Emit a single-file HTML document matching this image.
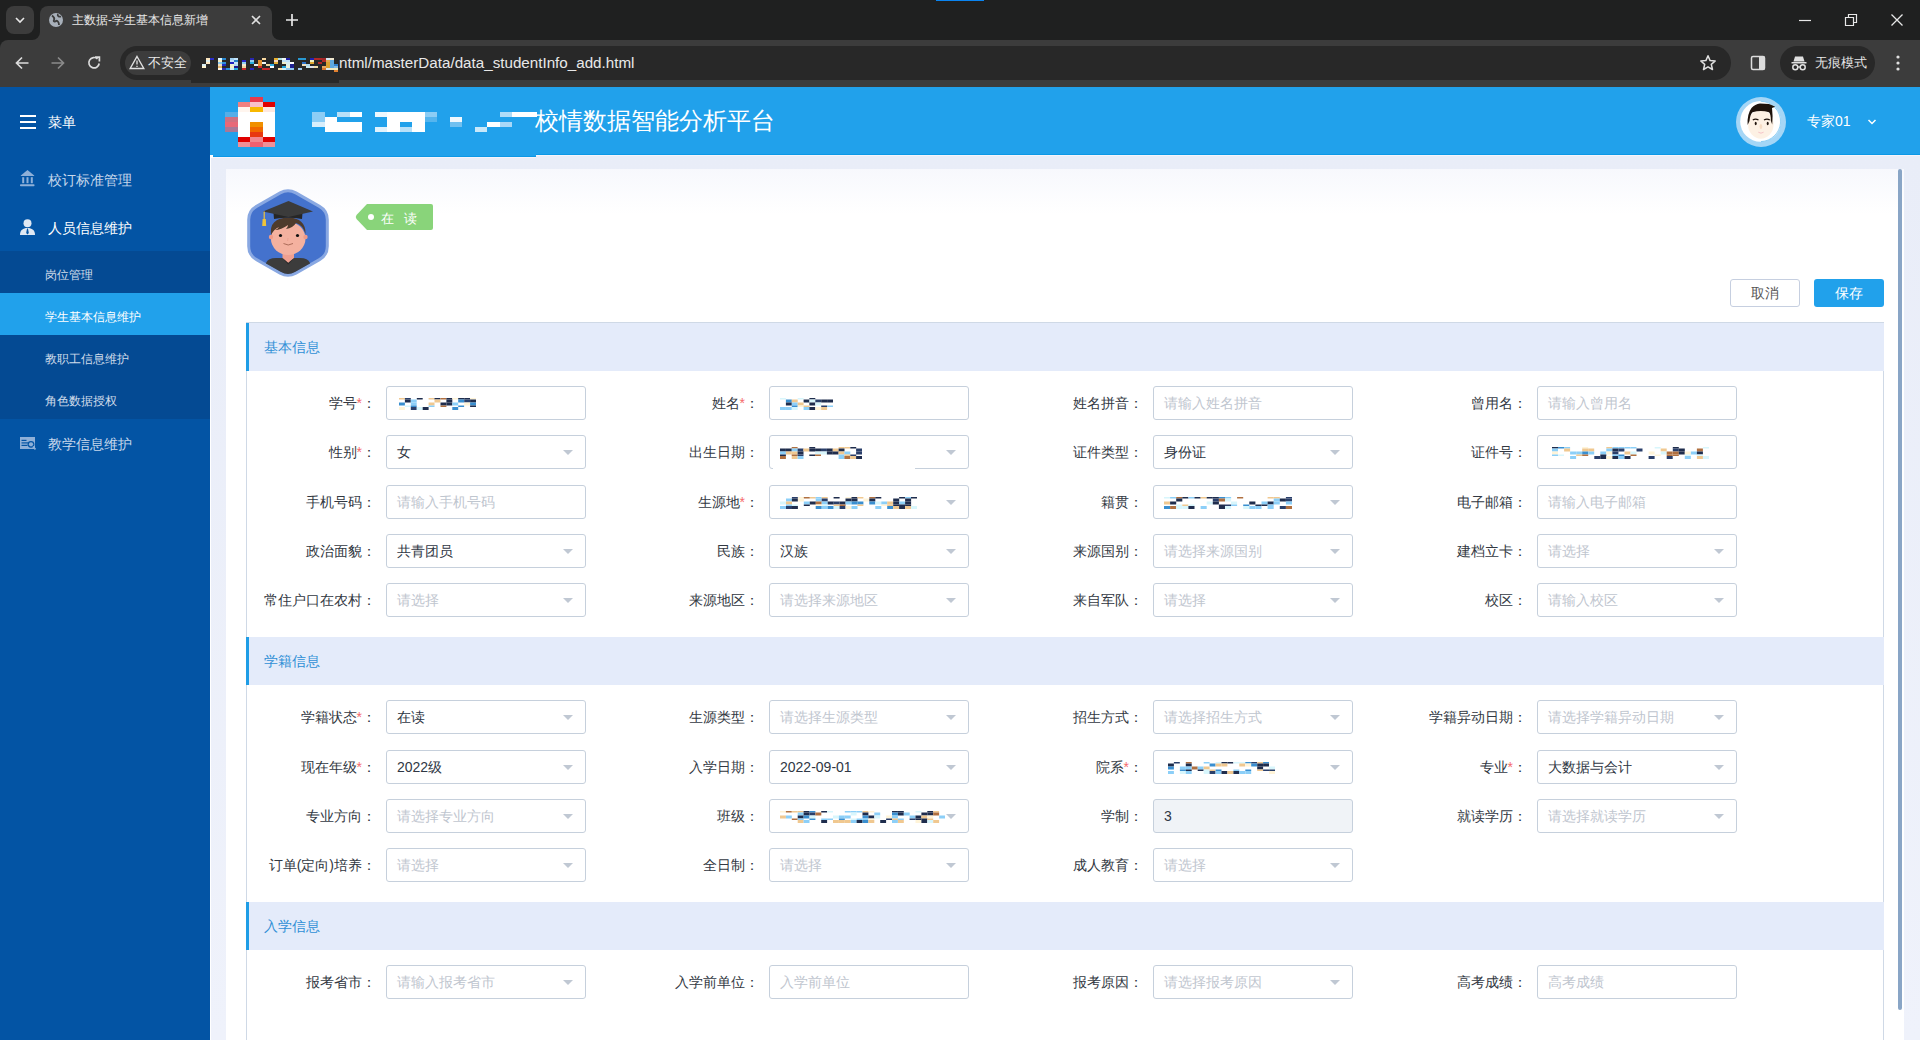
<!DOCTYPE html><html><head><meta charset="utf-8"><title>s</title><style>
*{box-sizing:border-box;margin:0;padding:0}
html,body{width:1920px;height:1040px;overflow:hidden;background:#eceff9;font-family:"Liberation Sans",sans-serif;}
.a{position:absolute}
#tabs{left:0;top:0;width:1920px;height:40px;background:#1f2020}
#toolbar{left:0;top:40px;width:1920px;height:47px;background:#3c3c3c}
#omni{left:120px;top:46px;width:1611px;height:34px;border-radius:17px;background:#282828}
#side{left:0;top:87px;width:210px;height:953px;background:#0354a4}
#hdr{left:210px;top:87px;width:1710px;height:68px;background:#21a1eb}
#card{left:226px;top:169px;width:1678px;height:871px;background:linear-gradient(#f7f8fd,#fff 45px)}
.sbt{position:absolute;color:#fff;font-size:14px;line-height:16px;white-space:nowrap}
.sec{position:absolute;left:246px;width:1638px;height:48px;background:#e4ebfa;border-left:3px solid #1f9de6}
.sec span{position:absolute;left:15px;top:16px;font-size:14px;color:#2f8fd6;line-height:16px}
.lbl{position:absolute;width:200px;text-align:right;font-size:14px;color:#323842;line-height:16px;white-space:nowrap}
.lbl i{font-style:normal;color:#f56c6c}
.in{position:absolute;width:200px;height:34px;border:1px solid #c6d0dc;border-radius:3px;background:#fff;font-size:14px;color:#2f3744;line-height:16px;padding:8px 10px;white-space:nowrap;overflow:hidden}
.in.ph{color:#bfc6cf}
.in.dis{background:#f0f3f7}
.in.sel::after{content:"";position:absolute;right:12px;top:14px;border-left:5px solid transparent;border-right:5px solid transparent;border-top:5px solid #c0c8d3}
.px{position:absolute}
</style></head><body>
<div id="tabs" class="a"></div>
<div class="a" style="left:936px;top:0;width:48px;height:1px;background:#0a84f0"></div>
<div class="a" style="left:40px;top:6px;width:232px;height:40px;border-radius:8px 8px 0 0;background:#3c3c3c"></div>
<div class="a" style="left:32px;top:32px;width:8px;height:8px;background:#3c3c3c"></div><div class="a" style="left:24px;top:24px;width:16px;height:16px;border-radius:0 0 8px 0;background:#1f2020"></div>
<div class="a" style="left:272px;top:32px;width:8px;height:8px;background:#3c3c3c"></div><div class="a" style="left:272px;top:24px;width:16px;height:16px;border-radius:0 0 0 8px;background:#1f2020"></div>
<div class="a" style="left:6px;top:6px;width:28px;height:28px;border-radius:8px;background:#3c3c3c"></div>
<svg class="a" style="left:14px;top:14px" width="12" height="12" viewBox="0 0 12 12"><path d="M2 4 L6 8 L10 4" stroke="#e8e8e8" stroke-width="1.6" fill="none"/></svg>
<svg class="a" style="left:49px;top:13px" width="14" height="14" viewBox="0 0 14 14"><circle cx="7" cy="7" r="7" fill="#a8b0ba"/><path d="M3 2.5 C5 4,6 5,5 7 C4 8.5,6 9,7 8 C8 7,10 9,10 12 M9 1 C8 3,10 4,12 3.5" stroke="#3c3c3c" stroke-width="1.8" fill="none"/></svg>
<div class="a" style="left:72px;top:12px;font-size:12px;line-height:16px;color:#e8e8e8;white-space:nowrap">主数据-学生基本信息新增</div>
<svg class="a" style="left:250px;top:14px" width="12" height="12" viewBox="0 0 12 12"><path d="M2 2L10 10M10 2L2 10" stroke="#e0e0e0" stroke-width="1.6"/></svg>
<svg class="a" style="left:285px;top:13px" width="14" height="14" viewBox="0 0 14 14"><path d="M7 1V13M1 7H13" stroke="#e8e8e8" stroke-width="1.7"/></svg>
<svg class="a" style="left:1798px;top:13px" width="14" height="14" viewBox="0 0 14 14"><path d="M1 7.5H13" stroke="#e8e8e8" stroke-width="1.2"/></svg>
<svg class="a" style="left:1844px;top:13px" width="14" height="14" viewBox="0 0 14 14"><path d="M1.5 4.5H9.5V12.5H1.5Z M4.5 4.5V1.5H12.5V9.5H9.5" stroke="#e8e8e8" stroke-width="1.2" fill="none"/></svg>
<svg class="a" style="left:1890px;top:13px" width="14" height="14" viewBox="0 0 14 14"><path d="M1.5 1.5L12.5 12.5M12.5 1.5L1.5 12.5" stroke="#e8e8e8" stroke-width="1.3"/></svg>
<div id="toolbar" class="a"></div>
<div class="a" style="left:0;top:40px;width:8px;height:8px;background:#1f2020"></div><div class="a" style="left:0;top:40px;width:16px;height:16px;border-radius:8px 0 0 0;background:#3c3c3c"></div>
<svg class="a" style="left:14px;top:55px" width="16" height="16" viewBox="0 0 16 16"><path d="M14.5 8H2.5M8 2.5L2.5 8L8 13.5" stroke="#dcdcdc" stroke-width="1.7" fill="none"/></svg>
<svg class="a" style="left:50px;top:55px" width="16" height="16" viewBox="0 0 16 16"><path d="M1.5 8H13.5M8 2.5L13.5 8L8 13.5" stroke="#8a8a8a" stroke-width="1.7" fill="none"/></svg>
<svg class="a" style="left:86px;top:55px" width="16" height="16" viewBox="0 0 16 16"><path d="M13.2 8.5A5.2 5.2 0 1 1 11.5 3.8" stroke="#dcdcdc" stroke-width="1.7" fill="none"/><path d="M9 2.2H13.4V6.6" stroke="#dcdcdc" stroke-width="1.7" fill="none"/></svg>
<div id="omni" class="a"></div>
<div class="a" style="left:191px;top:70px;width:148px;height:13px;background:#282828"></div>
<div class="a" style="left:125px;top:51px;width:66px;height:24px;border-radius:12px;background:#3c3c3c"></div>
<svg class="a" style="left:129px;top:55px" width="16" height="15" viewBox="0 0 16 15"><path d="M8 1.5L14.8 13.5H1.2Z" stroke="#e0e0e0" stroke-width="1.4" fill="none"/><path d="M8 5.5V9.5M8 10.8V12" stroke="#e0e0e0" stroke-width="1.3"/></svg>
<div class="a" style="left:148px;top:55px;font-size:13px;line-height:16px;color:#e8e8e8;white-space:nowrap">不安全</div>
<div class="a" style="left:339px;top:54px;font-size:15.2px;line-height:17px;color:#e8e8e8;white-space:nowrap;width:300px;overflow:hidden">ntml/masterData/data_studentInfo_add.html</div>
<svg class="a" style="left:202px;top:58px" width="140" height="14"><rect x="0" y="6" width="4" height="2" fill="#d8eef5"/><rect x="0" y="8" width="4" height="2" fill="#fff4d0"/><rect x="4" y="0" width="4" height="2" fill="#fbe6c0"/><rect x="4" y="2" width="4" height="2" fill="#ddeef0"/><rect x="4" y="4" width="4" height="2" fill="#fbe6c0"/><rect x="8" y="0" width="4" height="2" fill="#2a2ec8"/><rect x="16" y="0" width="4" height="2" fill="#e0f8ff"/><rect x="16" y="2" width="4" height="2" fill="#f5f0c8"/><rect x="16" y="4" width="4" height="2" fill="#8cc8ec"/><rect x="16" y="6" width="4" height="2" fill="#f0e0c0"/><rect x="16" y="8" width="4" height="2" fill="#e8b870"/><rect x="16" y="10" width="4" height="2" fill="#fff8e8"/><rect x="20" y="0" width="4" height="2" fill="#2888d0"/><rect x="20" y="4" width="4" height="2" fill="#3090d8"/><rect x="20" y="6" width="4" height="2" fill="#2030c0"/><rect x="20" y="10" width="4" height="2" fill="#2a2eb0"/><rect x="24" y="10" width="4" height="2" fill="#2a90d8"/><rect x="28" y="0" width="4" height="2" fill="#a0d0f0"/><rect x="28" y="2" width="4" height="2" fill="#c0e0f8"/><rect x="28" y="4" width="4" height="2" fill="#2020c0"/><rect x="28" y="6" width="4" height="2" fill="#f0f0d0"/><rect x="28" y="8" width="4" height="2" fill="#f4f0c8"/><rect x="28" y="10" width="4" height="2" fill="#d0ecf8"/><rect x="32" y="0" width="4" height="2" fill="#c0e4fc"/><rect x="32" y="2" width="4" height="2" fill="#2a80c8"/><rect x="32" y="4" width="4" height="2" fill="#c8e4f8"/><rect x="32" y="6" width="4" height="2" fill="#b0d8f0"/><rect x="32" y="8" width="4" height="2" fill="#201a90"/><rect x="32" y="10" width="4" height="2" fill="#28b0e0"/><rect x="40" y="2" width="4" height="2" fill="#2828c8"/><rect x="40" y="4" width="4" height="2" fill="#90d0f0"/><rect x="40" y="6" width="4" height="2" fill="#f4e8d0"/><rect x="40" y="8" width="4" height="2" fill="#f0d8a0"/><rect x="40" y="10" width="4" height="2" fill="#c82828"/><rect x="48" y="0" width="4" height="2" fill="#2828b0"/><rect x="48" y="2" width="4" height="2" fill="#90d0f0"/><rect x="48" y="4" width="4" height="2" fill="#28b0e0"/><rect x="48" y="10" width="4" height="2" fill="#2828c0"/><rect x="52" y="6" width="4" height="2" fill="#f0f0f0"/><rect x="56" y="2" width="4" height="2" fill="#e09030"/><rect x="56" y="4" width="4" height="2" fill="#e09030"/><rect x="56" y="6" width="4" height="2" fill="#e09030"/><rect x="56" y="8" width="4" height="2" fill="#c82828"/><rect x="60" y="0" width="4" height="2" fill="#f8d8a0"/><rect x="60" y="4" width="4" height="2" fill="#f0f8f8"/><rect x="60" y="10" width="4" height="2" fill="#c82828"/><rect x="64" y="6" width="4" height="2" fill="#f0d8a0"/><rect x="64" y="10" width="4" height="2" fill="#c82828"/><rect x="68" y="6" width="4" height="2" fill="#30b0e8"/><rect x="68" y="8" width="4" height="2" fill="#ffffff"/><rect x="72" y="0" width="4" height="2" fill="#e8b030"/><rect x="72" y="2" width="4" height="2" fill="#f8d8c0"/><rect x="72" y="4" width="4" height="2" fill="#e8b030"/><rect x="76" y="0" width="4" height="2" fill="#b0e0e0"/><rect x="76" y="10" width="4" height="2" fill="#f8e0a8"/><rect x="80" y="0" width="4" height="2" fill="#f0f8f8"/><rect x="80" y="2" width="4" height="2" fill="#c0e0f8"/><rect x="80" y="4" width="4" height="2" fill="#f0ecc8"/><rect x="80" y="8" width="4" height="2" fill="#20a0d8"/><rect x="80" y="10" width="4" height="2" fill="#d0f0f8"/><rect x="84" y="0" width="4" height="2" fill="#2020a0"/><rect x="84" y="2" width="4" height="2" fill="#c0e0f8"/><rect x="84" y="4" width="4" height="2" fill="#d8ecf0"/><rect x="84" y="6" width="4" height="2" fill="#e0f0e8"/><rect x="84" y="8" width="4" height="2" fill="#f0f0d8"/><rect x="84" y="10" width="4" height="2" fill="#90c8f0"/><rect x="88" y="4" width="4" height="2" fill="#ffffff"/><rect x="88" y="6" width="4" height="2" fill="#202090"/><rect x="88" y="8" width="4" height="2" fill="#202090"/><rect x="88" y="10" width="4" height="2" fill="#90c8f0"/><rect x="96" y="0" width="4" height="2" fill="#2898d0"/><rect x="96" y="10" width="4" height="2" fill="#a0c8f0"/><rect x="100" y="0" width="4" height="2" fill="#2898d0"/><rect x="100" y="4" width="4" height="2" fill="#2a70c8"/><rect x="100" y="6" width="4" height="2" fill="#f0e0c0"/><rect x="104" y="6" width="4" height="2" fill="#b0d8f0"/><rect x="104" y="8" width="4" height="2" fill="#c8e8f0"/><rect x="108" y="0" width="4" height="2" fill="#2020b0"/><rect x="108" y="2" width="4" height="2" fill="#f0f0c0"/><rect x="108" y="4" width="4" height="2" fill="#e0a830"/><rect x="108" y="8" width="4" height="2" fill="#e0e0e8"/><rect x="112" y="0" width="4" height="2" fill="#b02828"/><rect x="112" y="8" width="4" height="2" fill="#f0dca8"/><rect x="116" y="0" width="4" height="2" fill="#b02828"/><rect x="116" y="4" width="4" height="2" fill="#b02828"/><rect x="120" y="0" width="4" height="2" fill="#a02828"/><rect x="120" y="2" width="4" height="2" fill="#b02828"/><rect x="120" y="8" width="4" height="2" fill="#e8a860"/><rect x="120" y="10" width="4" height="2" fill="#d87830"/><rect x="124" y="0" width="4" height="2" fill="#d8e8f0"/><rect x="124" y="2" width="4" height="2" fill="#e0a850"/><rect x="124" y="4" width="4" height="2" fill="#d8a030"/><rect x="124" y="6" width="4" height="2" fill="#d8a030"/><rect x="124" y="8" width="4" height="2" fill="#d8a030"/><rect x="124" y="10" width="4" height="2" fill="#d8e8f0"/><rect x="128" y="0" width="4" height="2" fill="#f0e8d0"/><rect x="128" y="2" width="4" height="2" fill="#60a8e0"/><rect x="128" y="4" width="4" height="2" fill="#60a8e0"/><rect x="128" y="6" width="4" height="2" fill="#60a8e0"/><rect x="128" y="8" width="4" height="2" fill="#60a8e0"/><rect x="128" y="10" width="4" height="2" fill="#f0e8c0"/><rect x="132" y="6" width="4" height="2" fill="#3080d0"/><rect x="132" y="8" width="4" height="2" fill="#80b8e8"/><rect x="132" y="10" width="4" height="2" fill="#f0e8c0"/><rect x="132" y="12" width="4" height="2" fill="#e08030"/></svg>
<svg class="a" style="left:1699px;top:54px" width="18" height="18" viewBox="0 0 18 18"><path d="M9 1.8L11.1 6.6L16.2 7L12.3 10.4L13.5 15.5L9 12.8L4.5 15.5L5.7 10.4L1.8 7L6.9 6.6Z" stroke="#e0e0e0" stroke-width="1.5" fill="none" stroke-linejoin="round"/></svg>
<svg class="a" style="left:1750px;top:55px" width="16" height="16" viewBox="0 0 16 16"><rect x="1.5" y="1.5" width="13" height="13" rx="1.5" stroke="#dcdcdc" stroke-width="1.5" fill="none"/><rect x="9" y="1.5" width="5.5" height="13" fill="#dcdcdc"/></svg>
<div class="a" style="left:1780px;top:46px;width:95px;height:34px;border-radius:17px;background:#282828"></div>
<svg class="a" style="left:1791px;top:55px" width="16" height="16" viewBox="0 0 16 16"><path d="M4 1.5H12L13.5 6.5H2.5Z" fill="#e0e0e0"/><rect x="0.5" y="7" width="15" height="1.5" fill="#e0e0e0"/><circle cx="4.3" cy="12.3" r="2.5" stroke="#e0e0e0" stroke-width="1.5" fill="none"/><circle cx="11.7" cy="12.3" r="2.5" stroke="#e0e0e0" stroke-width="1.5" fill="none"/><path d="M6.8 12H9.2" stroke="#e0e0e0" stroke-width="1.3"/></svg>
<div class="a" style="left:1815px;top:55px;font-size:13px;line-height:16px;color:#e8e8e8;white-space:nowrap">无痕模式</div>
<svg class="a" style="left:1892px;top:54px" width="12" height="18" viewBox="0 0 12 18"><circle cx="6" cy="3" r="1.6" fill="#e0e0e0"/><circle cx="6" cy="9" r="1.6" fill="#e0e0e0"/><circle cx="6" cy="15" r="1.6" fill="#e0e0e0"/></svg>
<div id="side" class="a"></div>
<div id="hdr" class="a"></div>
<div class="a" style="left:210px;top:155px;width:1710px;height:885px;background:linear-gradient(#e9edf8,#eff2fb)"></div>
<div class="a" style="left:213px;top:155px;width:323px;height:2px;background:#21a1eb"></div>
<div class="a" style="left:213px;top:156px;width:323px;height:1px;background:#0c98e6"></div>
<div class="a" style="left:536px;top:154px;width:1384px;height:1px;background:#0c98e6"></div>
<div class="a" style="left:536px;top:155px;width:1384px;height:1px;background:#f6f4fb"></div>
<div class="a" style="left:213px;top:157px;width:323px;height:1px;background:#f6f4fb"></div>
<div class="a" style="left:210px;top:155px;width:1px;height:885px;background:#fff"></div>
<div class="a" style="left:210px;top:155px;width:3px;height:3px;background:#fff"></div>
<div id="card" class="a"></div>
<div class="a" style="left:1898px;top:169px;width:4px;height:841px;border-radius:2px;background:#89a5c6"></div>
<svg class="a" style="left:20px;top:115px" width="16" height="14" viewBox="0 0 16 14"><rect x="0" y="0" width="16" height="2" fill="#fff"/><rect x="0" y="6" width="16" height="2" fill="#fff"/><rect x="0" y="12" width="16" height="2" fill="#fff"/></svg>
<div class="sbt" style="left:48px;top:114px">菜单</div>
<svg class="a" style="left:20px;top:170px" width="15" height="17" viewBox="0 0 15 17"><path d="M7.5 0L14.2 5.6Q14.5 6 14 6H1Q0.5 6 0.8 5.6Z" fill="#8fb0d8"/><rect x="2.2" y="7.2" width="2" height="6" fill="#8fb0d8"/><rect x="6.5" y="7.2" width="2" height="6" fill="#8fb0d8"/><rect x="10.8" y="7.2" width="2" height="6" fill="#8fb0d8"/><rect x="0" y="14.2" width="14.5" height="2" rx="0.8" fill="#8fb0d8"/></svg>
<div class="sbt" style="left:48px;top:172px;color:#c8d8ec">校订标准管理</div>
<svg class="a" style="left:20px;top:219px" width="15" height="16" viewBox="0 0 15 16"><circle cx="7.5" cy="4.2" r="4" fill="#dfe8f3"/><path d="M0 16C0 11 3 9 7.5 9C12 9 15 11 15 16Z" fill="#dfe8f3"/><path d="M7 9.5L8 9.5L8.8 14L7.5 15.5L6.2 14Z" fill="#0354a4"/></svg>
<div class="sbt" style="left:48px;top:220px">人员信息维护</div>
<div class="a" style="left:0;top:251px;width:210px;height:168px;background:#044a93"></div>
<div class="a" style="left:0;top:293px;width:210px;height:42px;background:#21a1eb"></div>
<div class="sbt" style="left:45px;top:267px;font-size:12px;color:#d0dcea">岗位管理</div>
<div class="sbt" style="left:45px;top:309px;font-size:12px">学生基本信息维护</div>
<div class="sbt" style="left:45px;top:351px;font-size:12px;color:#d0dcea">教职工信息维护</div>
<div class="sbt" style="left:45px;top:393px;font-size:12px;color:#d0dcea">角色数据授权</div>
<svg class="a" style="left:20px;top:437px" width="16" height="14" viewBox="0 0 16 14"><rect x="0" y="0" width="15" height="12" fill="#8fb0d8"/><rect x="1.5" y="2.8" width="5" height="1.2" fill="#0354a4"/><rect x="1.5" y="5.3" width="7" height="1.2" fill="#0354a4"/><rect x="1.5" y="7.8" width="6" height="1.2" fill="#0354a4"/><circle cx="11" cy="7.3" r="3.4" fill="#0354a4"/><circle cx="11" cy="7.3" r="2.1" fill="#8fb0d8"/><path d="M13 9.5L15.5 12.5" stroke="#8fb0d8" stroke-width="1.7"/></svg>
<div class="sbt" style="left:48px;top:436px;color:#c8d8ec">教学信息维护</div>
<div class="px" style="left:250px;top:97px;width:13px;height:5px;background:#e83a4c"></div>
<div class="px" style="left:238px;top:102px;width:12px;height:5px;background:#f08080"></div>
<div class="px" style="left:250px;top:102px;width:13px;height:5px;background:#f8c0c8"></div>
<div class="px" style="left:263px;top:102px;width:12px;height:5px;background:#e00000"></div>
<div class="px" style="left:238px;top:107px;width:12px;height:5px;background:#fff5ee"></div>
<div class="px" style="left:250px;top:107px;width:13px;height:5px;background:#f8b800"></div>
<div class="px" style="left:263px;top:107px;width:12px;height:5px;background:#fde8e0"></div>
<div class="px" style="left:225px;top:112px;width:13px;height:5px;background:#55aee8"></div>
<div class="px" style="left:238px;top:112px;width:12px;height:5px;background:#fff"></div>
<div class="px" style="left:250px;top:112px;width:13px;height:5px;background:#fff"></div>
<div class="px" style="left:263px;top:112px;width:12px;height:5px;background:#fff"></div>
<div class="px" style="left:225px;top:117px;width:13px;height:5px;background:#d07080"></div>
<div class="px" style="left:238px;top:117px;width:12px;height:5px;background:#fff"></div>
<div class="px" style="left:250px;top:117px;width:13px;height:5px;background:#fff"></div>
<div class="px" style="left:263px;top:117px;width:12px;height:5px;background:#fff"></div>
<div class="px" style="left:225px;top:122px;width:13px;height:5px;background:#e86878"></div>
<div class="px" style="left:238px;top:122px;width:12px;height:5px;background:#fff"></div>
<div class="px" style="left:250px;top:122px;width:13px;height:5px;background:#f09000"></div>
<div class="px" style="left:263px;top:122px;width:12px;height:5px;background:#fff"></div>
<div class="px" style="left:225px;top:127px;width:13px;height:5px;background:#a87898"></div>
<div class="px" style="left:238px;top:127px;width:12px;height:5px;background:#fff"></div>
<div class="px" style="left:250px;top:127px;width:13px;height:5px;background:#f06800"></div>
<div class="px" style="left:263px;top:127px;width:12px;height:5px;background:#fff"></div>
<div class="px" style="left:238px;top:132px;width:12px;height:5px;background:#fff"></div>
<div class="px" style="left:250px;top:132px;width:13px;height:5px;background:#e83810"></div>
<div class="px" style="left:263px;top:132px;width:12px;height:5px;background:#fff"></div>
<div class="px" style="left:238px;top:137px;width:12px;height:5px;background:#e00000"></div>
<div class="px" style="left:250px;top:137px;width:13px;height:5px;background:#f08890"></div>
<div class="px" style="left:263px;top:137px;width:12px;height:5px;background:#e00000"></div>
<div class="px" style="left:238px;top:142px;width:12px;height:5px;background:#f09098"></div>
<div class="px" style="left:250px;top:142px;width:13px;height:5px;background:#f06070"></div>
<div class="px" style="left:263px;top:142px;width:12px;height:5px;background:#f09098"></div>
<div class="px" style="left:312.0px;top:112px;width:12.5px;height:5px;background:#8ccdf5"></div>
<div class="px" style="left:312.0px;top:117px;width:12.5px;height:5px;background:#8ccdf5"></div>
<div class="px" style="left:312.0px;top:122px;width:12.5px;height:5px;background:#d8eefb"></div>
<div class="px" style="left:324.5px;top:117px;width:12.5px;height:5px;background:#fff"></div>
<div class="px" style="left:324.5px;top:122px;width:12.5px;height:5px;background:#fff"></div>
<div class="px" style="left:324.5px;top:127px;width:12.5px;height:5px;background:#fff"></div>
<div class="px" style="left:337.0px;top:112px;width:12.5px;height:5px;background:#b8e0f8"></div>
<div class="px" style="left:337.0px;top:122px;width:12.5px;height:5px;background:#fff"></div>
<div class="px" style="left:337.0px;top:127px;width:12.5px;height:5px;background:#fff"></div>
<div class="px" style="left:349.5px;top:112px;width:12.5px;height:5px;background:#fff"></div>
<div class="px" style="left:349.5px;top:122px;width:12.5px;height:5px;background:#fff"></div>
<div class="px" style="left:349.5px;top:127px;width:12.5px;height:5px;background:#fff"></div>
<div class="px" style="left:374.5px;top:112px;width:12.5px;height:5px;background:#eef8fe"></div>
<div class="px" style="left:374.5px;top:127px;width:12.5px;height:5px;background:#e0f2fd"></div>
<div class="px" style="left:387.0px;top:112px;width:12.5px;height:5px;background:#fff"></div>
<div class="px" style="left:387.0px;top:117px;width:12.5px;height:5px;background:#fff"></div>
<div class="px" style="left:387.0px;top:122px;width:12.5px;height:5px;background:#fff"></div>
<div class="px" style="left:387.0px;top:127px;width:12.5px;height:5px;background:#fff"></div>
<div class="px" style="left:399.5px;top:112px;width:12.5px;height:5px;background:#fff"></div>
<div class="px" style="left:399.5px;top:117px;width:12.5px;height:5px;background:#fff"></div>
<div class="px" style="left:399.5px;top:127px;width:12.5px;height:5px;background:#b8e0f8"></div>
<div class="px" style="left:412.0px;top:112px;width:12.5px;height:5px;background:#fff"></div>
<div class="px" style="left:412.0px;top:117px;width:12.5px;height:5px;background:#fff"></div>
<div class="px" style="left:412.0px;top:122px;width:12.5px;height:5px;background:#fff"></div>
<div class="px" style="left:412.0px;top:127px;width:12.5px;height:5px;background:#fff"></div>
<div class="px" style="left:424.5px;top:112px;width:12.5px;height:5px;background:#8ccdf5"></div>
<div class="px" style="left:424.5px;top:117px;width:12.5px;height:5px;background:#55b5ee"></div>
<div class="px" style="left:449.5px;top:117px;width:12.5px;height:5px;background:#f0f8fe"></div>
<div class="px" style="left:449.5px;top:122px;width:12.5px;height:5px;background:#70c0f0"></div>
<div class="px" style="left:474.5px;top:127px;width:12.5px;height:5px;background:#c8e8fa"></div>
<div class="px" style="left:487.0px;top:122px;width:12.5px;height:5px;background:#fff"></div>
<div class="px" style="left:499.5px;top:112px;width:12.5px;height:5px;background:#b0dcf8"></div>
<div class="px" style="left:499.5px;top:122px;width:12.5px;height:5px;background:#a8d8f8"></div>
<div class="px" style="left:512.0px;top:112px;width:12.5px;height:5px;background:#fff"></div>
<div class="px" style="left:524.5px;top:112px;width:12.5px;height:5px;background:#fff"></div>
<div class="a" style="left:535px;top:107px;font-size:24px;line-height:28px;color:#fff;white-space:nowrap;letter-spacing:0px">校情数据智能分析平台</div>
<svg class="a" style="left:1736px;top:97px" width="50" height="50" viewBox="0 0 50 50"><circle cx="25" cy="25" r="25" fill="#a5d6f6"/><circle cx="24.6" cy="24.4" r="20.4" fill="#fff"/><path d="M24.6 4.3A20.2 20.2 0 0 1 44.5 26A20.6 20.6 0 0 1 25 44.6" stroke="#2aa2ea" stroke-width="0.8" fill="none" opacity="0.6"/><ellipse cx="24.8" cy="27.5" rx="12.8" ry="14.2" fill="#fdf1e4"/><path d="M11.6 28 Q11 17 15.5 11 Q19 7.2 24 6.6 L33 7 Q36 8.2 39.2 9.8 L36 11 Q37 18 36.2 27.5 L34.8 23.5 Q35 17.5 33 15.3 Q25 12.8 16.5 15.3 Q14 18 13.5 24 Z" fill="#1e130c"/><path d="M16.8 23 Q19.5 21.2 22.5 23" stroke="#1e130c" stroke-width="1.3" fill="none"/><path d="M28 23 Q31 21.2 33.8 23" stroke="#1e130c" stroke-width="1.3" fill="none"/><ellipse cx="19.7" cy="26.5" rx="1" ry="1.7" fill="#1e130c"/><ellipse cx="31.7" cy="26.5" rx="1" ry="1.7" fill="#1e130c"/><ellipse cx="24.9" cy="29.5" rx="1.4" ry="2.6" fill="#f6dcc4"/><path d="M22.3 35.2 Q25 37.2 27.6 35.2" stroke="#f6c4c8" stroke-width="1" fill="none"/></svg>
<div class="a" style="left:1807px;top:113px;font-size:14px;line-height:16px;color:#fff;white-space:nowrap">专家01</div>
<svg class="a" style="left:1867px;top:118px" width="10" height="8" viewBox="0 0 10 8"><path d="M1.5 2L5 5.5L8.5 2" stroke="#fff" stroke-width="1.5" fill="none"/></svg>
<svg class="a" style="left:246px;top:187px" width="84" height="92" viewBox="0 0 84 92">
<defs><clipPath id="hc"><path d="M35.05 6.96 Q42.00 3.00 48.95 6.96 L72.85 20.54 Q79.80 24.50 79.80 32.50 L79.80 59.50 Q79.80 67.50 72.85 71.46 L48.95 85.04 Q42.00 89.00 35.05 85.04 L11.15 71.46 Q4.20 67.50 4.20 59.50 L4.20 32.50 Q4.20 24.50 11.15 20.54 Z"/></clipPath></defs>
<path d="M34.17 5.93 Q42.00 1.50 49.83 5.93 L73.47 19.32 Q81.30 23.75 81.30 32.75 L81.30 59.25 Q81.30 68.25 73.47 72.68 L49.83 86.07 Q42.00 90.50 34.17 86.07 L10.53 72.68 Q2.70 68.25 2.70 59.25 L2.70 32.75 Q2.70 23.75 10.53 19.32 Z" fill="#4472cd" stroke="#89a8e2" stroke-width="3"/>
<g clip-path="url(#hc)"><g transform="translate(0,1)">
<path d="M18 90 L20 75 Q22 70 30 70 L54 70 Q62 70 64 75 L66 90 Z" fill="#3c3c3c"/>
<path d="M36.5 62 L48 62 L48 70 L42.2 75 L36.5 70Z" fill="#f0a090"/>
<path d="M36.5 70 L42.2 75 L48 70 L46 72.5 L42.2 76.5 L38.5 72.5Z" fill="#2a2a2a"/>
<ellipse cx="42.2" cy="50.5" rx="17.3" ry="16.5" fill="#f4b19f"/>
<circle cx="25" cy="49" r="2.2" fill="#f09a88"/><circle cx="59.5" cy="49" r="2.2" fill="#f09a88"/>
<path d="M25 47 Q23 30 42 29.5 Q60 30 59.5 46 Q57 37 50 35 Q47 40 40 41 Q42 39 42 37 Q35 42 29 42 Q32 41 33 39 Q28 41 25 47Z" fill="#4e3b2c"/>
<path d="M27.5 25 L56.5 25 L56 31 Q42 28.5 28 31Z" fill="#262626"/>
<path d="M17 23.5 L42.5 13 L67 23.5 L42.5 29Z" fill="#3b3b3b"/>
<path d="M18.2 23.5 L18.2 32" stroke="#f0c43a" stroke-width="1.2"/><path d="M16.6 31 L19.8 31 L20.2 38 L16.2 38Z" fill="#f0c43a"/>
<circle cx="34.5" cy="47.5" r="1.6" fill="#111"/><circle cx="51.5" cy="47.5" r="1.6" fill="#111"/>
<path d="M42 50 L41.6 53" stroke="#e89888" stroke-width="0.6"/>
<path d="M37.5 55.5 Q42.2 58.5 47 55.5" stroke="#9a5a48" stroke-width="0.8" fill="none"/>
</g></g>
</svg>
<svg class="a" style="left:355px;top:204px" width="79" height="26" viewBox="0 0 79 26"><path d="M12 0 L76 0 Q78 0 78 2 L78 24 Q78 26 76 26 L12 26 L1.5 15 Q0 13 1.5 11 Z" fill="#89d47a"/><circle cx="16" cy="13" r="3" fill="#fff"/></svg>
<div class="a" style="left:381px;top:211px;font-size:13px;line-height:15px;color:#fff;white-space:nowrap;letter-spacing:10px">在读</div>
<div class="a" style="left:1730px;top:279px;width:70px;height:28px;border:1px solid #c6cfe0;border-radius:3px;background:#fff;font-size:14px;line-height:26px;text-align:center;color:#555">取消</div>
<div class="a" style="left:1814px;top:279px;width:70px;height:28px;border-radius:3px;background:#21a1eb;font-size:14px;line-height:28px;text-align:center;color:#fff">保存</div>
<div class="a" style="left:246px;top:322px;width:1638px;height:718px;border:1px solid #cfd9e6;border-bottom:none;background:#fff"></div>
<div class="sec" style="top:323px"><span>基本信息</span></div>
<div class="sec" style="top:637px"><span>学籍信息</span></div>
<div class="sec" style="top:902px"><span>入学信息</span></div>
<div class="lbl" style="left:176px;top:395px">学号<i>*</i>：</div>
<div class="in" style="left:386px;top:386px"><span style="display:inline-block;width:2px"></span><svg width="77" height="12" style="vertical-align:top;margin-top:3px"><rect x="0.0" y="0" width="5.9" height="1.5" fill="#f0c890"/><rect x="5.9" y="0" width="5.9" height="1.5" fill="#2a3f6a"/><rect x="17.8" y="0" width="5.9" height="1.5" fill="#1f2d4d"/><rect x="29.6" y="0" width="5.9" height="1.5" fill="#f0c890"/><rect x="35.5" y="0" width="5.9" height="1.5" fill="#1f2d4d"/><rect x="41.5" y="0" width="5.9" height="1.5" fill="#b07040"/><rect x="47.4" y="0" width="5.9" height="1.5" fill="#1f2d4d"/><rect x="53.3" y="0" width="5.9" height="1.5" fill="#fff4d8"/><rect x="59.2" y="0" width="5.9" height="1.5" fill="#1f2d4d"/><rect x="65.2" y="0" width="5.9" height="1.5" fill="#1f2d4d"/><rect x="71.1" y="0" width="5.9" height="1.5" fill="#fff4d8"/><rect x="5.9" y="1.5" width="5.9" height="3" fill="#1f2d4d"/><rect x="11.8" y="1.5" width="5.9" height="3" fill="#8ccff8"/><rect x="35.5" y="1.5" width="5.9" height="3" fill="#f0c890"/><rect x="47.4" y="1.5" width="5.9" height="3" fill="#1f2d4d"/><rect x="59.2" y="1.5" width="5.9" height="3" fill="#3a8fd0"/><rect x="65.2" y="1.5" width="5.9" height="3" fill="#2a3f6a"/><rect x="71.1" y="1.5" width="5.9" height="3" fill="#1f2d4d"/><rect x="0.0" y="4.5" width="5.9" height="3" fill="#3a8fd0"/><rect x="11.8" y="4.5" width="5.9" height="3" fill="#8ccff8"/><rect x="29.6" y="4.5" width="5.9" height="3" fill="#f0c890"/><rect x="41.5" y="4.5" width="5.9" height="3" fill="#1f2d4d"/><rect x="47.4" y="4.5" width="5.9" height="3" fill="#1f2d4d"/><rect x="53.3" y="4.5" width="5.9" height="3" fill="#8ccff8"/><rect x="65.2" y="4.5" width="5.9" height="3" fill="#fff4d8"/><rect x="71.1" y="4.5" width="5.9" height="3" fill="#3a8fd0"/><rect x="5.9" y="7.5" width="5.9" height="1.5" fill="#d8f6fc"/><rect x="11.8" y="7.5" width="5.9" height="1.5" fill="#3a8fd0"/><rect x="29.6" y="7.5" width="5.9" height="1.5" fill="#8ccff8"/><rect x="41.5" y="7.5" width="5.9" height="1.5" fill="#b07040"/><rect x="59.2" y="7.5" width="5.9" height="1.5" fill="#3a8fd0"/><rect x="71.1" y="7.5" width="5.9" height="1.5" fill="#1f2d4d"/><rect x="0.0" y="9" width="5.9" height="3" fill="#fff4d8"/><rect x="11.8" y="9" width="5.9" height="3" fill="#2a3f6a"/><rect x="17.8" y="9" width="5.9" height="3" fill="#d8f6fc"/><rect x="23.7" y="9" width="5.9" height="3" fill="#1f2d4d"/><rect x="53.3" y="9" width="5.9" height="3" fill="#3a8fd0"/></svg></div>
<div class="lbl" style="left:559px;top:395px">姓名<i>*</i>：</div>
<div class="in" style="left:769px;top:386px"><svg width="53" height="12" style="vertical-align:top;margin-top:3px"><rect x="0.0" y="0" width="5.9" height="1.5" fill="#d8f6fc"/><rect x="17.7" y="0" width="5.9" height="1.5" fill="#d8f6fc"/><rect x="29.4" y="0" width="5.9" height="1.5" fill="#1f2d4d"/><rect x="5.9" y="1.5" width="5.9" height="3" fill="#3a8fd0"/><rect x="11.8" y="1.5" width="5.9" height="3" fill="#f0c890"/><rect x="23.6" y="1.5" width="5.9" height="3" fill="#1f2d4d"/><rect x="29.4" y="1.5" width="5.9" height="3" fill="#d8f6fc"/><rect x="35.3" y="1.5" width="5.9" height="3" fill="#2a3f6a"/><rect x="41.2" y="1.5" width="5.9" height="3" fill="#1f2d4d"/><rect x="47.1" y="1.5" width="5.9" height="3" fill="#1f2d4d"/><rect x="5.9" y="4.5" width="5.9" height="3" fill="#1f2d4d"/><rect x="11.8" y="4.5" width="5.9" height="3" fill="#8ccff8"/><rect x="17.7" y="4.5" width="5.9" height="3" fill="#f0c890"/><rect x="29.4" y="4.5" width="5.9" height="3" fill="#1f2d4d"/><rect x="35.3" y="4.5" width="5.9" height="3" fill="#d8f6fc"/><rect x="11.8" y="7.5" width="5.9" height="1.5" fill="#3a8fd0"/><rect x="17.7" y="7.5" width="5.9" height="1.5" fill="#fff4d8"/><rect x="23.6" y="7.5" width="5.9" height="1.5" fill="#f0c890"/><rect x="41.2" y="7.5" width="5.9" height="1.5" fill="#2a3f6a"/><rect x="47.1" y="7.5" width="5.9" height="1.5" fill="#8ccff8"/><rect x="0.0" y="9" width="5.9" height="3" fill="#8ccff8"/><rect x="5.9" y="9" width="5.9" height="3" fill="#8ccff8"/><rect x="11.8" y="9" width="5.9" height="3" fill="#d8f6fc"/><rect x="23.6" y="9" width="5.9" height="3" fill="#8ccff8"/><rect x="29.4" y="9" width="5.9" height="3" fill="#1f2d4d"/><rect x="35.3" y="9" width="5.9" height="3" fill="#fff4d8"/><rect x="41.2" y="9" width="5.9" height="3" fill="#f0c890"/></svg></div>
<div class="lbl" style="left:943px;top:395px">姓名拼音：</div>
<div class="in ph" style="left:1153px;top:386px">请输入姓名拼音</div>
<div class="lbl" style="left:1327px;top:395px">曾用名：</div>
<div class="in ph" style="left:1537px;top:386px">请输入曾用名</div>
<div class="lbl" style="left:176px;top:444px">性别<i>*</i>：</div>
<div class="in sel" style="left:386px;top:435px">女</div>
<div class="lbl" style="left:559px;top:444px">出生日期：</div>
<div class="in sel" style="left:769px;top:435px"><svg width="82" height="12" style="vertical-align:top;margin-top:3px"><rect x="11.7" y="0" width="5.9" height="1.5" fill="#b07040"/><rect x="29.3" y="0" width="5.9" height="1.5" fill="#1f2d4d"/><rect x="58.6" y="0" width="5.9" height="1.5" fill="#f0c890"/><rect x="64.4" y="0" width="5.9" height="1.5" fill="#f0c890"/><rect x="70.3" y="0" width="5.9" height="1.5" fill="#1f2d4d"/><rect x="0.0" y="1.5" width="5.9" height="3" fill="#1f2d4d"/><rect x="5.9" y="1.5" width="5.9" height="3" fill="#1f2d4d"/><rect x="11.7" y="1.5" width="5.9" height="3" fill="#8ccff8"/><rect x="17.6" y="1.5" width="5.9" height="3" fill="#2a3f6a"/><rect x="23.4" y="1.5" width="5.9" height="3" fill="#f0c890"/><rect x="29.3" y="1.5" width="5.9" height="3" fill="#1f2d4d"/><rect x="35.1" y="1.5" width="5.9" height="3" fill="#1f2d4d"/><rect x="41.0" y="1.5" width="5.9" height="3" fill="#2a3f6a"/><rect x="46.9" y="1.5" width="5.9" height="3" fill="#1f2d4d"/><rect x="52.7" y="1.5" width="5.9" height="3" fill="#f0c890"/><rect x="58.6" y="1.5" width="5.9" height="3" fill="#1f2d4d"/><rect x="76.1" y="1.5" width="5.9" height="3" fill="#2a3f6a"/><rect x="0.0" y="4.5" width="5.9" height="3" fill="#8ccff8"/><rect x="5.9" y="4.5" width="5.9" height="3" fill="#f0c890"/><rect x="11.7" y="4.5" width="5.9" height="3" fill="#f0c890"/><rect x="17.6" y="4.5" width="5.9" height="3" fill="#1f2d4d"/><rect x="35.1" y="4.5" width="5.9" height="3" fill="#d8f6fc"/><rect x="41.0" y="4.5" width="5.9" height="3" fill="#d8f6fc"/><rect x="46.9" y="4.5" width="5.9" height="3" fill="#1f2d4d"/><rect x="52.7" y="4.5" width="5.9" height="3" fill="#1f2d4d"/><rect x="58.6" y="4.5" width="5.9" height="3" fill="#f0c890"/><rect x="64.4" y="4.5" width="5.9" height="3" fill="#8ccff8"/><rect x="76.1" y="4.5" width="5.9" height="3" fill="#2a3f6a"/><rect x="0.0" y="7.5" width="5.9" height="1.5" fill="#1f2d4d"/><rect x="11.7" y="7.5" width="5.9" height="1.5" fill="#b07040"/><rect x="17.6" y="7.5" width="5.9" height="1.5" fill="#2a3f6a"/><rect x="29.3" y="7.5" width="5.9" height="1.5" fill="#1f2d4d"/><rect x="35.1" y="7.5" width="5.9" height="1.5" fill="#b07040"/><rect x="58.6" y="7.5" width="5.9" height="1.5" fill="#8ccff8"/><rect x="64.4" y="7.5" width="5.9" height="1.5" fill="#f0c890"/><rect x="70.3" y="7.5" width="5.9" height="1.5" fill="#2a3f6a"/><rect x="0.0" y="9" width="5.9" height="3" fill="#b07040"/><rect x="11.7" y="9" width="5.9" height="3" fill="#f0c890"/><rect x="17.6" y="9" width="5.9" height="3" fill="#8ccff8"/><rect x="58.6" y="9" width="5.9" height="3" fill="#8ccff8"/><rect x="64.4" y="9" width="5.9" height="3" fill="#b07040"/><rect x="70.3" y="9" width="5.9" height="3" fill="#f0c890"/><rect x="76.1" y="9" width="5.9" height="3" fill="#1f2d4d"/></svg></div>
<div class="lbl" style="left:943px;top:444px">证件类型：</div>
<div class="in sel" style="left:1153px;top:435px">身份证</div>
<div class="lbl" style="left:1327px;top:444px">证件号：</div>
<div class="in" style="left:1537px;top:435px"><span style="display:inline-block;width:4px"></span><svg width="157" height="12" style="vertical-align:top;margin-top:3px"><rect x="0.0" y="0" width="6.0" height="1.5" fill="#1f2d4d"/><rect x="6.0" y="0" width="6.0" height="1.5" fill="#3a8fd0"/><rect x="12.1" y="0" width="6.0" height="1.5" fill="#8ccff8"/><rect x="30.2" y="0" width="6.0" height="1.5" fill="#fff4d8"/><rect x="54.3" y="0" width="6.0" height="1.5" fill="#f0c890"/><rect x="60.4" y="0" width="6.0" height="1.5" fill="#8ccff8"/><rect x="66.4" y="0" width="6.0" height="1.5" fill="#8ccff8"/><rect x="72.5" y="0" width="6.0" height="1.5" fill="#8ccff8"/><rect x="78.5" y="0" width="6.0" height="1.5" fill="#8ccff8"/><rect x="102.7" y="0" width="6.0" height="1.5" fill="#d8f6fc"/><rect x="120.8" y="0" width="6.0" height="1.5" fill="#1f2d4d"/><rect x="151.0" y="0" width="6.0" height="1.5" fill="#d8f6fc"/><rect x="0.0" y="1.5" width="6.0" height="3" fill="#8ccff8"/><rect x="12.1" y="1.5" width="6.0" height="3" fill="#f0c890"/><rect x="30.2" y="1.5" width="6.0" height="3" fill="#f0c890"/><rect x="36.2" y="1.5" width="6.0" height="3" fill="#f0c890"/><rect x="54.3" y="1.5" width="6.0" height="3" fill="#8ccff8"/><rect x="60.4" y="1.5" width="6.0" height="3" fill="#1f2d4d"/><rect x="66.4" y="1.5" width="6.0" height="3" fill="#2a3f6a"/><rect x="84.5" y="1.5" width="6.0" height="3" fill="#2a3f6a"/><rect x="108.7" y="1.5" width="6.0" height="3" fill="#f0c890"/><rect x="120.8" y="1.5" width="6.0" height="3" fill="#2a3f6a"/><rect x="126.8" y="1.5" width="6.0" height="3" fill="#1f2d4d"/><rect x="144.9" y="1.5" width="6.0" height="3" fill="#b07040"/><rect x="0.0" y="4.5" width="6.0" height="3" fill="#fff4d8"/><rect x="18.1" y="4.5" width="6.0" height="3" fill="#8ccff8"/><rect x="24.2" y="4.5" width="6.0" height="3" fill="#8ccff8"/><rect x="30.2" y="4.5" width="6.0" height="3" fill="#3a8fd0"/><rect x="36.2" y="4.5" width="6.0" height="3" fill="#8ccff8"/><rect x="48.3" y="4.5" width="6.0" height="3" fill="#8ccff8"/><rect x="54.3" y="4.5" width="6.0" height="3" fill="#fff4d8"/><rect x="60.4" y="4.5" width="6.0" height="3" fill="#2a3f6a"/><rect x="72.5" y="4.5" width="6.0" height="3" fill="#f0c890"/><rect x="78.5" y="4.5" width="6.0" height="3" fill="#d8f6fc"/><rect x="96.6" y="4.5" width="6.0" height="3" fill="#fff4d8"/><rect x="108.7" y="4.5" width="6.0" height="3" fill="#d8f6fc"/><rect x="114.7" y="4.5" width="6.0" height="3" fill="#b07040"/><rect x="120.8" y="4.5" width="6.0" height="3" fill="#b07040"/><rect x="126.8" y="4.5" width="6.0" height="3" fill="#1f2d4d"/><rect x="132.8" y="4.5" width="6.0" height="3" fill="#fff4d8"/><rect x="138.9" y="4.5" width="6.0" height="3" fill="#8ccff8"/><rect x="144.9" y="4.5" width="6.0" height="3" fill="#1f2d4d"/><rect x="0.0" y="7.5" width="6.0" height="1.5" fill="#8ccff8"/><rect x="6.0" y="7.5" width="6.0" height="1.5" fill="#d8f6fc"/><rect x="24.2" y="7.5" width="6.0" height="1.5" fill="#f0c890"/><rect x="30.2" y="7.5" width="6.0" height="1.5" fill="#b07040"/><rect x="48.3" y="7.5" width="6.0" height="1.5" fill="#1f2d4d"/><rect x="60.4" y="7.5" width="6.0" height="1.5" fill="#8ccff8"/><rect x="66.4" y="7.5" width="6.0" height="1.5" fill="#3a8fd0"/><rect x="78.5" y="7.5" width="6.0" height="1.5" fill="#b07040"/><rect x="102.7" y="7.5" width="6.0" height="1.5" fill="#fff4d8"/><rect x="114.7" y="7.5" width="6.0" height="1.5" fill="#b07040"/><rect x="120.8" y="7.5" width="6.0" height="1.5" fill="#b07040"/><rect x="132.8" y="7.5" width="6.0" height="1.5" fill="#d8f6fc"/><rect x="144.9" y="7.5" width="6.0" height="1.5" fill="#d8f6fc"/><rect x="18.1" y="9" width="6.0" height="3" fill="#8ccff8"/><rect x="42.3" y="9" width="6.0" height="3" fill="#2a3f6a"/><rect x="48.3" y="9" width="6.0" height="3" fill="#1f2d4d"/><rect x="54.3" y="9" width="6.0" height="3" fill="#fff4d8"/><rect x="60.4" y="9" width="6.0" height="3" fill="#1f2d4d"/><rect x="66.4" y="9" width="6.0" height="3" fill="#8ccff8"/><rect x="72.5" y="9" width="6.0" height="3" fill="#1f2d4d"/><rect x="96.6" y="9" width="6.0" height="3" fill="#2a3f6a"/><rect x="114.7" y="9" width="6.0" height="3" fill="#2a3f6a"/><rect x="132.8" y="9" width="6.0" height="3" fill="#8ccff8"/><rect x="144.9" y="9" width="6.0" height="3" fill="#f0c890"/><rect x="151.0" y="9" width="6.0" height="3" fill="#d8f6fc"/></svg></div>
<div class="lbl" style="left:176px;top:494px">手机号码：</div>
<div class="in ph" style="left:386px;top:485px">请输入手机号码</div>
<div class="lbl" style="left:559px;top:494px">生源地<i>*</i>：</div>
<div class="in sel" style="left:769px;top:485px"><svg width="137" height="12" style="vertical-align:top;margin-top:3px"><rect x="11.9" y="0" width="6.0" height="1.5" fill="#2a3f6a"/><rect x="17.9" y="0" width="6.0" height="1.5" fill="#fff4d8"/><rect x="23.8" y="0" width="6.0" height="1.5" fill="#b07040"/><rect x="29.8" y="0" width="6.0" height="1.5" fill="#f0c890"/><rect x="35.7" y="0" width="6.0" height="1.5" fill="#8ccff8"/><rect x="41.7" y="0" width="6.0" height="1.5" fill="#f0c890"/><rect x="53.6" y="0" width="6.0" height="1.5" fill="#1f2d4d"/><rect x="65.5" y="0" width="6.0" height="1.5" fill="#fff4d8"/><rect x="71.5" y="0" width="6.0" height="1.5" fill="#1f2d4d"/><rect x="77.4" y="0" width="6.0" height="1.5" fill="#f0c890"/><rect x="89.3" y="0" width="6.0" height="1.5" fill="#b07040"/><rect x="95.3" y="0" width="6.0" height="1.5" fill="#1f2d4d"/><rect x="119.1" y="0" width="6.0" height="1.5" fill="#1f2d4d"/><rect x="125.1" y="0" width="6.0" height="1.5" fill="#8ccff8"/><rect x="131.0" y="0" width="6.0" height="1.5" fill="#1f2d4d"/><rect x="6.0" y="1.5" width="6.0" height="3" fill="#8ccff8"/><rect x="11.9" y="1.5" width="6.0" height="3" fill="#1f2d4d"/><rect x="17.9" y="1.5" width="6.0" height="3" fill="#fff4d8"/><rect x="35.7" y="1.5" width="6.0" height="3" fill="#8ccff8"/><rect x="41.7" y="1.5" width="6.0" height="3" fill="#2a3f6a"/><rect x="65.5" y="1.5" width="6.0" height="3" fill="#1f2d4d"/><rect x="71.5" y="1.5" width="6.0" height="3" fill="#1f2d4d"/><rect x="83.4" y="1.5" width="6.0" height="3" fill="#fff4d8"/><rect x="89.3" y="1.5" width="6.0" height="3" fill="#1f2d4d"/><rect x="113.2" y="1.5" width="6.0" height="3" fill="#1f2d4d"/><rect x="125.1" y="1.5" width="6.0" height="3" fill="#1f2d4d"/><rect x="0.0" y="4.5" width="6.0" height="3" fill="#d8f6fc"/><rect x="6.0" y="4.5" width="6.0" height="3" fill="#f0c890"/><rect x="23.8" y="4.5" width="6.0" height="3" fill="#8ccff8"/><rect x="29.8" y="4.5" width="6.0" height="3" fill="#1f2d4d"/><rect x="35.7" y="4.5" width="6.0" height="3" fill="#b07040"/><rect x="41.7" y="4.5" width="6.0" height="3" fill="#8ccff8"/><rect x="47.7" y="4.5" width="6.0" height="3" fill="#1f2d4d"/><rect x="53.6" y="4.5" width="6.0" height="3" fill="#2a3f6a"/><rect x="59.6" y="4.5" width="6.0" height="3" fill="#1f2d4d"/><rect x="65.5" y="4.5" width="6.0" height="3" fill="#8ccff8"/><rect x="71.5" y="4.5" width="6.0" height="3" fill="#3a8fd0"/><rect x="77.4" y="4.5" width="6.0" height="3" fill="#3a8fd0"/><rect x="89.3" y="4.5" width="6.0" height="3" fill="#3a8fd0"/><rect x="95.3" y="4.5" width="6.0" height="3" fill="#d8f6fc"/><rect x="101.3" y="4.5" width="6.0" height="3" fill="#8ccff8"/><rect x="107.2" y="4.5" width="6.0" height="3" fill="#f0c890"/><rect x="113.2" y="4.5" width="6.0" height="3" fill="#1f2d4d"/><rect x="119.1" y="4.5" width="6.0" height="3" fill="#8ccff8"/><rect x="125.1" y="4.5" width="6.0" height="3" fill="#1f2d4d"/><rect x="6.0" y="7.5" width="6.0" height="1.5" fill="#8ccff8"/><rect x="11.9" y="7.5" width="6.0" height="1.5" fill="#d8f6fc"/><rect x="23.8" y="7.5" width="6.0" height="1.5" fill="#1f2d4d"/><rect x="35.7" y="7.5" width="6.0" height="1.5" fill="#fff4d8"/><rect x="41.7" y="7.5" width="6.0" height="1.5" fill="#d8f6fc"/><rect x="53.6" y="7.5" width="6.0" height="1.5" fill="#f0c890"/><rect x="59.6" y="7.5" width="6.0" height="1.5" fill="#b07040"/><rect x="77.4" y="7.5" width="6.0" height="1.5" fill="#f0c890"/><rect x="101.3" y="7.5" width="6.0" height="1.5" fill="#fff4d8"/><rect x="107.2" y="7.5" width="6.0" height="1.5" fill="#f0c890"/><rect x="113.2" y="7.5" width="6.0" height="1.5" fill="#1f2d4d"/><rect x="119.1" y="7.5" width="6.0" height="1.5" fill="#1f2d4d"/><rect x="125.1" y="7.5" width="6.0" height="1.5" fill="#1f2d4d"/><rect x="0.0" y="9" width="6.0" height="3" fill="#8ccff8"/><rect x="6.0" y="9" width="6.0" height="3" fill="#2a3f6a"/><rect x="11.9" y="9" width="6.0" height="3" fill="#1f2d4d"/><rect x="35.7" y="9" width="6.0" height="3" fill="#3a8fd0"/><rect x="41.7" y="9" width="6.0" height="3" fill="#8ccff8"/><rect x="47.7" y="9" width="6.0" height="3" fill="#3a8fd0"/><rect x="53.6" y="9" width="6.0" height="3" fill="#d8f6fc"/><rect x="59.6" y="9" width="6.0" height="3" fill="#2a3f6a"/><rect x="65.5" y="9" width="6.0" height="3" fill="#fff4d8"/><rect x="71.5" y="9" width="6.0" height="3" fill="#8ccff8"/><rect x="95.3" y="9" width="6.0" height="3" fill="#8ccff8"/><rect x="107.2" y="9" width="6.0" height="3" fill="#3a8fd0"/><rect x="113.2" y="9" width="6.0" height="3" fill="#f0c890"/><rect x="119.1" y="9" width="6.0" height="3" fill="#1f2d4d"/><rect x="125.1" y="9" width="6.0" height="3" fill="#f0c890"/><rect x="131.0" y="9" width="6.0" height="3" fill="#d8f6fc"/></svg></div>
<div class="lbl" style="left:943px;top:494px">籍贯：</div>
<div class="in sel" style="left:1153px;top:485px"><svg width="128" height="12" style="vertical-align:top;margin-top:3px"><rect x="0.0" y="0" width="6.1" height="1.5" fill="#d8f6fc"/><rect x="6.1" y="0" width="6.1" height="1.5" fill="#8ccff8"/><rect x="12.2" y="0" width="6.1" height="1.5" fill="#b07040"/><rect x="18.3" y="0" width="6.1" height="1.5" fill="#1f2d4d"/><rect x="24.4" y="0" width="6.1" height="1.5" fill="#8ccff8"/><rect x="30.5" y="0" width="6.1" height="1.5" fill="#1f2d4d"/><rect x="36.6" y="0" width="6.1" height="1.5" fill="#f0c890"/><rect x="42.7" y="0" width="6.1" height="1.5" fill="#1f2d4d"/><rect x="48.8" y="0" width="6.1" height="1.5" fill="#1f2d4d"/><rect x="54.9" y="0" width="6.1" height="1.5" fill="#3a8fd0"/><rect x="61.0" y="0" width="6.1" height="1.5" fill="#8ccff8"/><rect x="73.1" y="0" width="6.1" height="1.5" fill="#b07040"/><rect x="103.6" y="0" width="6.1" height="1.5" fill="#f0c890"/><rect x="109.7" y="0" width="6.1" height="1.5" fill="#f0c890"/><rect x="121.9" y="0" width="6.1" height="1.5" fill="#2a3f6a"/><rect x="12.2" y="1.5" width="6.1" height="3" fill="#1f2d4d"/><rect x="48.8" y="1.5" width="6.1" height="3" fill="#2a3f6a"/><rect x="54.9" y="1.5" width="6.1" height="3" fill="#b07040"/><rect x="61.0" y="1.5" width="6.1" height="3" fill="#d8f6fc"/><rect x="109.7" y="1.5" width="6.1" height="3" fill="#8ccff8"/><rect x="115.8" y="1.5" width="6.1" height="3" fill="#1f2d4d"/><rect x="121.9" y="1.5" width="6.1" height="3" fill="#2a3f6a"/><rect x="0.0" y="4.5" width="6.1" height="3" fill="#f0c890"/><rect x="6.1" y="4.5" width="6.1" height="3" fill="#1f2d4d"/><rect x="42.7" y="4.5" width="6.1" height="3" fill="#d8f6fc"/><rect x="48.8" y="4.5" width="6.1" height="3" fill="#1f2d4d"/><rect x="67.0" y="4.5" width="6.1" height="3" fill="#d8f6fc"/><rect x="85.3" y="4.5" width="6.1" height="3" fill="#1f2d4d"/><rect x="97.5" y="4.5" width="6.1" height="3" fill="#8ccff8"/><rect x="103.6" y="4.5" width="6.1" height="3" fill="#1f2d4d"/><rect x="109.7" y="4.5" width="6.1" height="3" fill="#8ccff8"/><rect x="121.9" y="4.5" width="6.1" height="3" fill="#8ccff8"/><rect x="12.2" y="7.5" width="6.1" height="1.5" fill="#d8f6fc"/><rect x="18.3" y="7.5" width="6.1" height="1.5" fill="#f0c890"/><rect x="24.4" y="7.5" width="6.1" height="1.5" fill="#d8f6fc"/><rect x="54.9" y="7.5" width="6.1" height="1.5" fill="#1f2d4d"/><rect x="61.0" y="7.5" width="6.1" height="1.5" fill="#2a3f6a"/><rect x="67.0" y="7.5" width="6.1" height="1.5" fill="#8ccff8"/><rect x="79.2" y="7.5" width="6.1" height="1.5" fill="#3a8fd0"/><rect x="91.4" y="7.5" width="6.1" height="1.5" fill="#1f2d4d"/><rect x="97.5" y="7.5" width="6.1" height="1.5" fill="#1f2d4d"/><rect x="103.6" y="7.5" width="6.1" height="1.5" fill="#8ccff8"/><rect x="0.0" y="9" width="6.1" height="3" fill="#3a8fd0"/><rect x="6.1" y="9" width="6.1" height="3" fill="#b07040"/><rect x="12.2" y="9" width="6.1" height="3" fill="#d8f6fc"/><rect x="18.3" y="9" width="6.1" height="3" fill="#d8f6fc"/><rect x="24.4" y="9" width="6.1" height="3" fill="#1f2d4d"/><rect x="36.6" y="9" width="6.1" height="3" fill="#8ccff8"/><rect x="54.9" y="9" width="6.1" height="3" fill="#1f2d4d"/><rect x="61.0" y="9" width="6.1" height="3" fill="#d8f6fc"/><rect x="79.2" y="9" width="6.1" height="3" fill="#d8f6fc"/><rect x="85.3" y="9" width="6.1" height="3" fill="#8ccff8"/><rect x="91.4" y="9" width="6.1" height="3" fill="#8ccff8"/><rect x="103.6" y="9" width="6.1" height="3" fill="#8ccff8"/><rect x="115.8" y="9" width="6.1" height="3" fill="#2a3f6a"/><rect x="121.9" y="9" width="6.1" height="3" fill="#b07040"/></svg></div>
<div class="lbl" style="left:1327px;top:494px">电子邮箱：</div>
<div class="in ph" style="left:1537px;top:485px">请输入电子邮箱</div>
<div class="lbl" style="left:176px;top:543px">政治面貌：</div>
<div class="in sel" style="left:386px;top:534px">共青团员</div>
<div class="lbl" style="left:559px;top:543px">民族：</div>
<div class="in sel" style="left:769px;top:534px">汉族</div>
<div class="lbl" style="left:943px;top:543px">来源国别：</div>
<div class="in sel ph" style="left:1153px;top:534px">请选择来源国别</div>
<div class="lbl" style="left:1327px;top:543px">建档立卡：</div>
<div class="in sel ph" style="left:1537px;top:534px">请选择</div>
<div class="lbl" style="left:176px;top:592px">常住户口在农村：</div>
<div class="in sel ph" style="left:386px;top:583px">请选择</div>
<div class="lbl" style="left:559px;top:592px">来源地区：</div>
<div class="in sel ph" style="left:769px;top:583px">请选择来源地区</div>
<div class="lbl" style="left:943px;top:592px">来自军队：</div>
<div class="in sel ph" style="left:1153px;top:583px">请选择</div>
<div class="lbl" style="left:1327px;top:592px">校区：</div>
<div class="in sel ph" style="left:1537px;top:583px">请输入校区</div>
<div class="a" style="left:773px;top:467px;width:142px;height:3px;background:#fff"></div>
<div class="lbl" style="left:176px;top:709px">学籍状态<i>*</i>：</div>
<div class="in sel" style="left:386px;top:700px">在读</div>
<div class="lbl" style="left:559px;top:709px">生源类型：</div>
<div class="in sel ph" style="left:769px;top:700px">请选择生源类型</div>
<div class="lbl" style="left:943px;top:709px">招生方式：</div>
<div class="in sel ph" style="left:1153px;top:700px">请选择招生方式</div>
<div class="lbl" style="left:1327px;top:709px">学籍异动日期：</div>
<div class="in sel ph" style="left:1537px;top:700px">请选择学籍异动日期</div>
<div class="lbl" style="left:176px;top:759px">现在年级<i>*</i>：</div>
<div class="in sel" style="left:386px;top:750px">2022级</div>
<div class="lbl" style="left:559px;top:759px">入学日期：</div>
<div class="in sel" style="left:769px;top:750px">2022-09-01</div>
<div class="lbl" style="left:943px;top:759px">院系<i>*</i>：</div>
<div class="in sel" style="left:1153px;top:750px"><span style="display:inline-block;width:4px"></span><svg width="107" height="12" style="vertical-align:top;margin-top:3px"><rect x="5.9" y="0" width="5.9" height="1.5" fill="#2a3f6a"/><rect x="17.8" y="0" width="5.9" height="1.5" fill="#b07040"/><rect x="35.7" y="0" width="5.9" height="1.5" fill="#8ccff8"/><rect x="47.6" y="0" width="5.9" height="1.5" fill="#d8f6fc"/><rect x="53.5" y="0" width="5.9" height="1.5" fill="#1f2d4d"/><rect x="59.4" y="0" width="5.9" height="1.5" fill="#1f2d4d"/><rect x="65.4" y="0" width="5.9" height="1.5" fill="#d8f6fc"/><rect x="71.3" y="0" width="5.9" height="1.5" fill="#d8f6fc"/><rect x="77.3" y="0" width="5.9" height="1.5" fill="#3a8fd0"/><rect x="83.2" y="0" width="5.9" height="1.5" fill="#2a3f6a"/><rect x="89.2" y="0" width="5.9" height="1.5" fill="#f0c890"/><rect x="95.1" y="0" width="5.9" height="1.5" fill="#3a8fd0"/><rect x="0.0" y="1.5" width="5.9" height="3" fill="#1f2d4d"/><rect x="17.8" y="1.5" width="5.9" height="3" fill="#1f2d4d"/><rect x="41.6" y="1.5" width="5.9" height="3" fill="#3a8fd0"/><rect x="47.6" y="1.5" width="5.9" height="3" fill="#f0c890"/><rect x="53.5" y="1.5" width="5.9" height="3" fill="#f0c890"/><rect x="71.3" y="1.5" width="5.9" height="3" fill="#f0c890"/><rect x="77.3" y="1.5" width="5.9" height="3" fill="#fff4d8"/><rect x="83.2" y="1.5" width="5.9" height="3" fill="#3a8fd0"/><rect x="89.2" y="1.5" width="5.9" height="3" fill="#1f2d4d"/><rect x="95.1" y="1.5" width="5.9" height="3" fill="#1f2d4d"/><rect x="0.0" y="4.5" width="5.9" height="3" fill="#3a8fd0"/><rect x="11.9" y="4.5" width="5.9" height="3" fill="#8ccff8"/><rect x="17.8" y="4.5" width="5.9" height="3" fill="#8ccff8"/><rect x="23.8" y="4.5" width="5.9" height="3" fill="#b07040"/><rect x="29.7" y="4.5" width="5.9" height="3" fill="#8ccff8"/><rect x="35.7" y="4.5" width="5.9" height="3" fill="#f0c890"/><rect x="89.2" y="4.5" width="5.9" height="3" fill="#1f2d4d"/><rect x="101.1" y="4.5" width="5.9" height="3" fill="#d8f6fc"/><rect x="11.9" y="7.5" width="5.9" height="1.5" fill="#3a8fd0"/><rect x="17.8" y="7.5" width="5.9" height="1.5" fill="#1f2d4d"/><rect x="29.7" y="7.5" width="5.9" height="1.5" fill="#1f2d4d"/><rect x="35.7" y="7.5" width="5.9" height="1.5" fill="#d8f6fc"/><rect x="41.6" y="7.5" width="5.9" height="1.5" fill="#f0c890"/><rect x="47.6" y="7.5" width="5.9" height="1.5" fill="#3a8fd0"/><rect x="65.4" y="7.5" width="5.9" height="1.5" fill="#8ccff8"/><rect x="77.3" y="7.5" width="5.9" height="1.5" fill="#3a8fd0"/><rect x="89.2" y="7.5" width="5.9" height="1.5" fill="#f0c890"/><rect x="95.1" y="7.5" width="5.9" height="1.5" fill="#2a3f6a"/><rect x="101.1" y="7.5" width="5.9" height="1.5" fill="#2a3f6a"/><rect x="0.0" y="9" width="5.9" height="3" fill="#8ccff8"/><rect x="11.9" y="9" width="5.9" height="3" fill="#d8f6fc"/><rect x="17.8" y="9" width="5.9" height="3" fill="#8ccff8"/><rect x="35.7" y="9" width="5.9" height="3" fill="#d8f6fc"/><rect x="41.6" y="9" width="5.9" height="3" fill="#2a3f6a"/><rect x="47.6" y="9" width="5.9" height="3" fill="#8ccff8"/><rect x="53.5" y="9" width="5.9" height="3" fill="#1f2d4d"/><rect x="59.4" y="9" width="5.9" height="3" fill="#f0c890"/><rect x="65.4" y="9" width="5.9" height="3" fill="#1f2d4d"/><rect x="71.3" y="9" width="5.9" height="3" fill="#8ccff8"/><rect x="77.3" y="9" width="5.9" height="3" fill="#8ccff8"/><rect x="101.1" y="9" width="5.9" height="3" fill="#fff4d8"/></svg></div>
<div class="lbl" style="left:1327px;top:759px">专业<i>*</i>：</div>
<div class="in sel" style="left:1537px;top:750px">大数据与会计</div>
<div class="lbl" style="left:176px;top:808px">专业方向：</div>
<div class="in sel ph" style="left:386px;top:799px">请选择专业方向</div>
<div class="lbl" style="left:559px;top:808px">班级：</div>
<div class="in sel" style="left:769px;top:799px"><svg width="165" height="12" style="vertical-align:top;margin-top:3px"><rect x="0.0" y="0" width="5.9" height="1.5" fill="#fff4d8"/><rect x="5.9" y="0" width="5.9" height="1.5" fill="#b07040"/><rect x="11.8" y="0" width="5.9" height="1.5" fill="#f0c890"/><rect x="17.7" y="0" width="5.9" height="1.5" fill="#f0c890"/><rect x="23.6" y="0" width="5.9" height="1.5" fill="#1f2d4d"/><rect x="29.5" y="0" width="5.9" height="1.5" fill="#3a8fd0"/><rect x="41.2" y="0" width="5.9" height="1.5" fill="#1f2d4d"/><rect x="47.1" y="0" width="5.9" height="1.5" fill="#d8f6fc"/><rect x="64.8" y="0" width="5.9" height="1.5" fill="#8ccff8"/><rect x="70.7" y="0" width="5.9" height="1.5" fill="#8ccff8"/><rect x="76.6" y="0" width="5.9" height="1.5" fill="#8ccff8"/><rect x="82.5" y="0" width="5.9" height="1.5" fill="#f0c890"/><rect x="88.4" y="0" width="5.9" height="1.5" fill="#fff4d8"/><rect x="112.0" y="0" width="5.9" height="1.5" fill="#1f2d4d"/><rect x="117.9" y="0" width="5.9" height="1.5" fill="#1f2d4d"/><rect x="135.5" y="0" width="5.9" height="1.5" fill="#d8f6fc"/><rect x="147.3" y="0" width="5.9" height="1.5" fill="#1f2d4d"/><rect x="153.2" y="0" width="5.9" height="1.5" fill="#f0c890"/><rect x="17.7" y="1.5" width="5.9" height="3" fill="#8ccff8"/><rect x="23.6" y="1.5" width="5.9" height="3" fill="#1f2d4d"/><rect x="29.5" y="1.5" width="5.9" height="3" fill="#2a3f6a"/><rect x="35.4" y="1.5" width="5.9" height="3" fill="#b07040"/><rect x="70.7" y="1.5" width="5.9" height="3" fill="#d8f6fc"/><rect x="82.5" y="1.5" width="5.9" height="3" fill="#1f2d4d"/><rect x="94.3" y="1.5" width="5.9" height="3" fill="#8ccff8"/><rect x="112.0" y="1.5" width="5.9" height="3" fill="#3a8fd0"/><rect x="117.9" y="1.5" width="5.9" height="3" fill="#1f2d4d"/><rect x="123.8" y="1.5" width="5.9" height="3" fill="#8ccff8"/><rect x="141.4" y="1.5" width="5.9" height="3" fill="#1f2d4d"/><rect x="147.3" y="1.5" width="5.9" height="3" fill="#1f2d4d"/><rect x="153.2" y="1.5" width="5.9" height="3" fill="#b07040"/><rect x="0.0" y="4.5" width="5.9" height="3" fill="#f0c890"/><rect x="5.9" y="4.5" width="5.9" height="3" fill="#8ccff8"/><rect x="17.7" y="4.5" width="5.9" height="3" fill="#1f2d4d"/><rect x="23.6" y="4.5" width="5.9" height="3" fill="#3a8fd0"/><rect x="29.5" y="4.5" width="5.9" height="3" fill="#d8f6fc"/><rect x="53.0" y="4.5" width="5.9" height="3" fill="#d8f6fc"/><rect x="58.9" y="4.5" width="5.9" height="3" fill="#8ccff8"/><rect x="64.8" y="4.5" width="5.9" height="3" fill="#8ccff8"/><rect x="82.5" y="4.5" width="5.9" height="3" fill="#3a8fd0"/><rect x="88.4" y="4.5" width="5.9" height="3" fill="#1f2d4d"/><rect x="94.3" y="4.5" width="5.9" height="3" fill="#d8f6fc"/><rect x="106.1" y="4.5" width="5.9" height="3" fill="#fff4d8"/><rect x="112.0" y="4.5" width="5.9" height="3" fill="#8ccff8"/><rect x="129.6" y="4.5" width="5.9" height="3" fill="#8ccff8"/><rect x="135.5" y="4.5" width="5.9" height="3" fill="#1f2d4d"/><rect x="141.4" y="4.5" width="5.9" height="3" fill="#f0c890"/><rect x="147.3" y="4.5" width="5.9" height="3" fill="#fff4d8"/><rect x="159.1" y="4.5" width="5.9" height="3" fill="#8ccff8"/><rect x="11.8" y="7.5" width="5.9" height="1.5" fill="#b07040"/><rect x="17.7" y="7.5" width="5.9" height="1.5" fill="#8ccff8"/><rect x="29.5" y="7.5" width="5.9" height="1.5" fill="#3a8fd0"/><rect x="41.2" y="7.5" width="5.9" height="1.5" fill="#8ccff8"/><rect x="47.1" y="7.5" width="5.9" height="1.5" fill="#8ccff8"/><rect x="58.9" y="7.5" width="5.9" height="1.5" fill="#3a8fd0"/><rect x="70.7" y="7.5" width="5.9" height="1.5" fill="#d8f6fc"/><rect x="76.6" y="7.5" width="5.9" height="1.5" fill="#8ccff8"/><rect x="82.5" y="7.5" width="5.9" height="1.5" fill="#8ccff8"/><rect x="88.4" y="7.5" width="5.9" height="1.5" fill="#fff4d8"/><rect x="106.1" y="7.5" width="5.9" height="1.5" fill="#2a3f6a"/><rect x="112.0" y="7.5" width="5.9" height="1.5" fill="#f0c890"/><rect x="117.9" y="7.5" width="5.9" height="1.5" fill="#8ccff8"/><rect x="129.6" y="7.5" width="5.9" height="1.5" fill="#2a3f6a"/><rect x="135.5" y="7.5" width="5.9" height="1.5" fill="#1f2d4d"/><rect x="141.4" y="7.5" width="5.9" height="1.5" fill="#1f2d4d"/><rect x="147.3" y="7.5" width="5.9" height="1.5" fill="#f0c890"/><rect x="17.7" y="9" width="5.9" height="3" fill="#f0c890"/><rect x="23.6" y="9" width="5.9" height="3" fill="#8ccff8"/><rect x="41.2" y="9" width="5.9" height="3" fill="#1f2d4d"/><rect x="53.0" y="9" width="5.9" height="3" fill="#f0c890"/><rect x="58.9" y="9" width="5.9" height="3" fill="#f0c890"/><rect x="64.8" y="9" width="5.9" height="3" fill="#f0c890"/><rect x="70.7" y="9" width="5.9" height="3" fill="#8ccff8"/><rect x="76.6" y="9" width="5.9" height="3" fill="#1f2d4d"/><rect x="82.5" y="9" width="5.9" height="3" fill="#3a8fd0"/><rect x="88.4" y="9" width="5.9" height="3" fill="#f0c890"/><rect x="100.2" y="9" width="5.9" height="3" fill="#1f2d4d"/><rect x="112.0" y="9" width="5.9" height="3" fill="#8ccff8"/><rect x="117.9" y="9" width="5.9" height="3" fill="#f0c890"/><rect x="135.5" y="9" width="5.9" height="3" fill="#fff4d8"/><rect x="141.4" y="9" width="5.9" height="3" fill="#1f2d4d"/><rect x="147.3" y="9" width="5.9" height="3" fill="#d8f6fc"/><rect x="153.2" y="9" width="5.9" height="3" fill="#f0c890"/></svg></div>
<div class="lbl" style="left:943px;top:808px">学制：</div>
<div class="in dis" style="left:1153px;top:799px">3</div>
<div class="lbl" style="left:1327px;top:808px">就读学历：</div>
<div class="in sel ph" style="left:1537px;top:799px">请选择就读学历</div>
<div class="lbl" style="left:176px;top:857px">订单(定向)培养：</div>
<div class="in sel ph" style="left:386px;top:848px">请选择</div>
<div class="lbl" style="left:559px;top:857px">全日制：</div>
<div class="in sel ph" style="left:769px;top:848px">请选择</div>
<div class="lbl" style="left:943px;top:857px">成人教育：</div>
<div class="in sel ph" style="left:1153px;top:848px">请选择</div>
<div class="lbl" style="left:176px;top:974px">报考省市：</div>
<div class="in sel ph" style="left:386px;top:965px">请输入报考省市</div>
<div class="lbl" style="left:559px;top:974px">入学前单位：</div>
<div class="in ph" style="left:769px;top:965px">入学前单位</div>
<div class="lbl" style="left:943px;top:974px">报考原因：</div>
<div class="in sel ph" style="left:1153px;top:965px">请选择报考原因</div>
<div class="lbl" style="left:1327px;top:974px">高考成绩：</div>
<div class="in ph" style="left:1537px;top:965px">高考成绩</div>
</body></html>
